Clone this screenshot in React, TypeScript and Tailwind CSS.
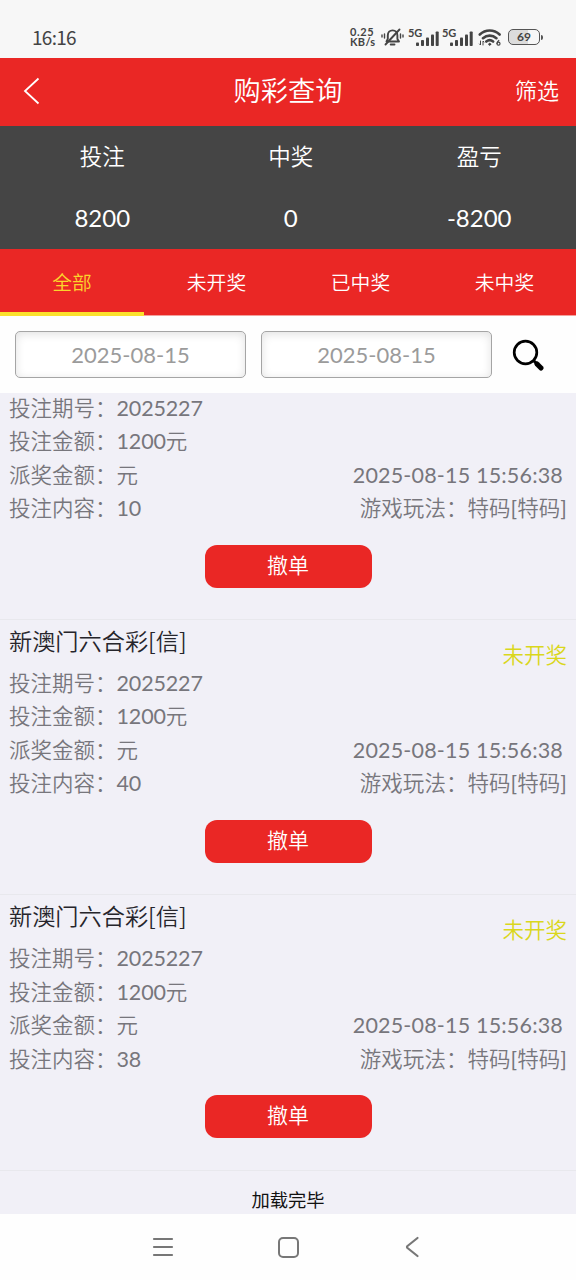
import React from "react";

const orders = [
  { content: "10", scrolled: true },
  { content: "40", scrolled: false },
  { content: "38", scrolled: false },
];

function Signal() {
  return (
    <div className="flex w-[31px] items-end">
      <span className="mb-[9px] w-[8px] text-[11px] leading-[9px] font-bold tracking-[-0.200px]">5G</span>
      <svg className="shrink-0" width="23" height="15" viewBox="0 0 23 15" fill="#444">
        <rect x="0" y="11.500" width="3" height="3.500" rx="0.8" />
        <rect x="5" y="9" width="3" height="6" rx="0.8" />
        <rect x="10" y="6.500" width="3" height="8.500" rx="0.8" />
        <rect x="15" y="3.500" width="3" height="11.500" rx="0.8" />
        <rect x="19.700" y="0.500" width="3" height="14.500" rx="0.8" />
      </svg>
    </div>
  );
}

function StatusBar() {
  return (
    <div className="flex h-[58px] shrink-0 items-center bg-[#f7f7f7] pt-[16px] pl-[32px] text-[#444]">
      <span className="w-[318px] font-['Noto_Sans_CJK_SC',sans-serif] text-[19px] tracking-[-0.700px]">16:16</span>
      <div className="w-[32px] text-[11px] leading-[10px] font-bold">
        <div className="tracking-[0.600px]">0.25</div>
        <div className="tracking-[0.300px]">KB/s</div>
      </div>
      <svg className="-ml-px" width="23" height="20" viewBox="0 0 23 20" fill="none" stroke="#444" strokeWidth="1.900" strokeLinecap="round" strokeLinejoin="round">
        <path d="M5.500 14.500h12.500l-1.600-2.600V8.400c0-3-2-5-4.800-5s-4.800 2-4.800 5v3.500z" />
        <path d="M9.700 17.500h3.800M4.500 17.500L18.500 2.500" />
        <path d="M3.500 7v4M1 8v2M19.500 7v4M22 8v2" strokeWidth="1.400" />
      </svg>
      <div className="ml-[4px] flex gap-[3px]">
        <Signal />
        <Signal />
      </div>
      <svg className="ml-[5px]" width="24" height="19" viewBox="0 0 24 19" fill="none" stroke="#444" strokeWidth="2.600" strokeLinecap="round">
        <path d="M1.800 6.500c5.700-5.300 14.100-5.300 19.800 0M5 10.200c3.900-3.500 9.500-3.500 13.400 0M8.300 13.500c2-1.700 4.800-1.700 6.800 0" />
        <circle cx="11.700" cy="16.300" r="1" fill="#444" strokeWidth="1" />
        <path d="M2.500 13v4l-1-1M5 17v-4l1 1" strokeWidth="1" />
        <path d="M20.800 12.500c-1.300 1-1.800 2-1.800 3" strokeWidth="1.200" />
        <circle cx="20.500" cy="15.700" r="1.500" strokeWidth="1.200" />
      </svg>
      <div className="ml-[6px] flex items-center">
        <div className="flex h-[16px] w-[32px] items-center justify-center rounded-[5px] border-[1.5px] border-[#555] bg-linear-to-r from-[#dcdcdc] from-65% to-[#f7f7f7] to-65% text-[12px] leading-none font-bold">69</div>
        <div className="ml-px h-[5px] w-[2px] rounded-r bg-[#555]" />
      </div>
    </div>
  );
}

function Header() {
  return (
    <header className="grid h-[68px] shrink-0 grid-cols-[1fr_auto_1fr] items-center bg-[#ea2725] text-white">
      <svg className="mb-[2px] ml-[22px]" width="20" height="28" viewBox="0 0 20 28" fill="none" stroke="#fff" strokeWidth="1.800">
        <path d="M16.500 1.500L3 14l13.500 12.500" />
      </svg>
      <h1 className="mb-[2px] text-[27.200px] leading-[40px] font-[350]">购彩查询</h1>
      <button className="mr-[17px] mb-[2px] justify-self-end text-[22px] leading-[32px] font-[350]">筛选</button>
    </header>
  );
}

function Stat({ label, value }: { label: string; value: string }) {
  return (
    <div className="w-[188.500px] text-center">
      <div className="h-[61px] text-[22.500px] leading-[61px] font-[350]">{label}</div>
      <div className="h-[62px] text-[24px] leading-[61px]">{value}</div>
    </div>
  );
}

function Tabs() {
  return (
    <nav className="flex h-[67px] shrink-0 border-b border-[#f3a09c] bg-[#ea2725] text-[19.800px] font-[350] text-white">
      <div className="-mb-px w-1/4 border-b-4 border-[#fbe12d] text-center leading-[66px] text-[#fbd52c]">全部</div>
      {["未开奖", "已中奖", "未中奖"].map((t) => (
        <div key={t} className="w-1/4 pl-px text-center leading-[66px]">{t}</div>
      ))}
    </nav>
  );
}

function DateField() {
  return (
    <div className="h-[47px] w-[231px] rounded-[5px] border border-[#a5a5a5] bg-white text-center text-[22px] leading-[45px] text-[#9b9b9b] shadow-[inset_0_2px_10px_rgba(0,0,0,0.12)]">
      2025-08-15
    </div>
  );
}

function Filters() {
  return (
    <div className="flex h-[77px] shrink-0 items-center gap-[15px] bg-[#fefefe] pl-[15px]">
      <DateField />
      <DateField />
      <svg className="mt-[2px] ml-[5px]" width="34" height="34" viewBox="0 0 34 34" fill="none" stroke="#000">
        <circle cx="13.500" cy="13.500" r="11.300" strokeWidth="2.700" />
        <path d="M21.500 21.500l4 4" strokeWidth="3" />
        <path d="M25 25l4 4" strokeWidth="5.200" strokeLinecap="round" />
      </svg>
    </div>
  );
}

function Num({ children }: { children: React.ReactNode }) {
  return <span className="font-normal tracking-[-0.150px]">{children}</span>;
}

function Order({ content, scrolled }: { content: string; scrolled: boolean }) {
  return (
    <article className="h-[275.300px] border-t border-[#e8e8ed] pr-[9px] pl-[9px]">
      <div className="flex h-[180.500px] justify-between text-[21.500px] leading-[33.500px] font-[350] text-[#77767c]">
        <div>
          <h2 className="h-[46.800px] font-['Noto_Sans_CJK_SC',sans-serif] text-[23.200px] leading-[40px] text-[#26252b]">
            {!scrolled && "新澳门六合彩[信]"}
          </h2>
          <p>投注期号：<Num>2025227</Num></p>
          <p>投注金额：<Num>1200</Num>元</p>
          <p>派奖金额：元</p>
          <p>投注内容：<Num>{content}</Num></p>
        </div>
        <div className="pt-[19px] text-right">
          <p className="h-[33.500px] text-[#dad71c]">{!scrolled && "未开奖"}</p>
          <p className="mt-[61.300px] mr-[4px] font-normal tracking-[0.180px]">2025-08-15 15:56:38</p>
          <p className="tracking-[0.050px]">游戏玩法：特码<span className="font-normal">[</span>特码<span className="font-normal">]</span></p>
        </div>
      </div>
      <button className="mx-auto mt-[19.500px] block h-[43px] w-[167px] rounded-[12px] bg-[#ea2725] pb-[3px] text-[21px] leading-[38px] font-[350] text-white">撤单</button>
    </article>
  );
}

export default function App() {
  return (
    <div className="flex h-[1280px] w-[576px] flex-col overflow-hidden bg-[#f1f0f7] font-[Lato,'Noto_Sans_CJK_SC',sans-serif]">
      <StatusBar />
      <Header />
      <section className="flex h-[123px] shrink-0 bg-[#454545] pl-[8px] text-white">
        <Stat label="投注" value="8200" />
        <Stat label="中奖" value="0" />
        <Stat label="盈亏" value="-8200" />
      </section>
      <Tabs />
      <Filters />
      <main className="h-[821px] shrink-0 overflow-hidden">
        <div className="-mt-[49.300px]">
          {orders.map((o) => (
            <Order key={o.content} {...o} />
          ))}
          <div className="border-t border-[#e8e8ed] text-center text-[18.300px] leading-[59px] text-[#111]">加载完毕</div>
        </div>
      </main>
      <footer className="flex h-[66px] shrink-0 items-center bg-[#fefefe] pl-[152px]">
        <svg width="22" height="22" viewBox="0 0 22 22" stroke="#777" strokeWidth="2.200" strokeLinecap="round">
          <path d="M2 3h18M2 11h18M2 19h18" />
        </svg>
        <div className="ml-[104px] h-[21px] w-[21px] rounded-[5px] border-2 border-[#777]" />
        <svg className="ml-[105px]" width="18" height="22" viewBox="0 0 18 22" fill="none" stroke="#777" strokeWidth="2.200" strokeLinecap="round" strokeLinejoin="round">
          <path d="M13.500 2L3.500 10q-1 1 0 2l10 8" />
        </svg>
      </footer>
    </div>
  );
}
